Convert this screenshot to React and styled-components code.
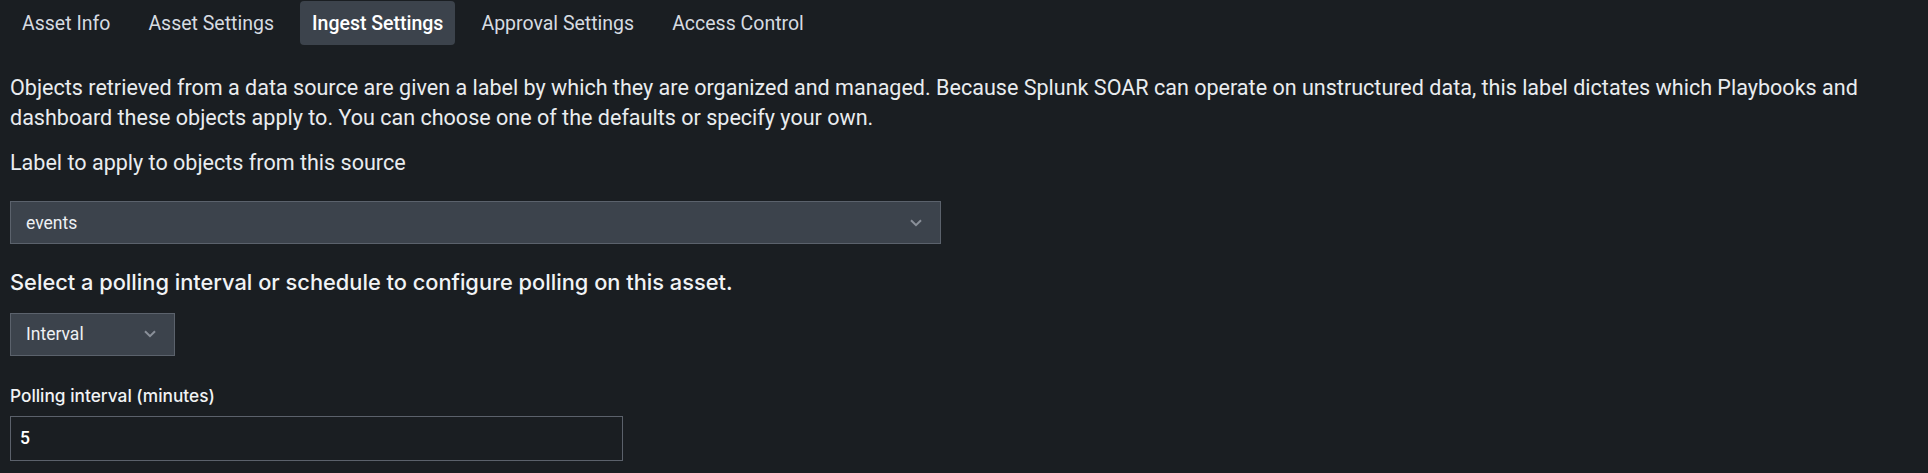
import React from 'react';
import styled, { createGlobalStyle } from 'styled-components';

const GlobalStyle = createGlobalStyle`
    html, body {
        margin: 0;
        background: #1a1e22;
    }
    body {
        font-family: Roboto, "Liberation Sans", sans-serif;
        color: #e9ecef;
    }
`;

const Page = styled.div`
    padding: 1px 10px 0 10px;
    width: 1880px;
`;

const TabBar = styled.nav`
    display: flex;
    gap: 14px;
    height: 44px;
`;

const Tab = styled.div`
    display: flex;
    align-items: center;
    padding: 0 12px;
    border-radius: 4px;
    font-size: 19.5px;
    font-weight: ${(p) => (p.active ? 500 : 400)};
    color: ${(p) => (p.active ? '#ffffff' : '#d6dbe1')};
    background: ${(p) => (p.active ? '#3c434c' : 'transparent')};
`;

const Intro = styled.p`
    margin: 28px 0 0 0;
    font-size: 21.55px;
    line-height: 30px;
`;

const FieldLabel = styled.div`
    margin-top: ${(p) => p.top || 0}px;
    font-size: 21.55px;
    line-height: 30px;
`;

const StrongLabel = styled.div`
    margin-top: ${(p) => p.top || 0}px;
    font-family: Inter, Roboto, sans-serif;
    font-size: ${(p) => p.size}px;
    font-weight: 500;
    line-height: ${(p) => p.lh}px;
    color: #f1f3f5;
`;

const Select = styled.div`
    box-sizing: border-box;
    display: flex;
    align-items: center;
    justify-content: space-between;
    width: ${(p) => p.width}px;
    height: 43px;
    margin-top: ${(p) => p.top}px;
    padding: 0 18px 0 15px;
    background: #3c434c;
    border: 1px solid #5b626c;
    font-size: 17.5px;
    color: #eef0f3;
`;

const Chevron = () => (
    <svg width="12" height="8" viewBox="0 0 12 8" fill="none">
        <path d="M1 1.2 L6 6.2 L11 1.2" stroke="#8a9099" strokeWidth="2" />
    </svg>
);

const TextInput = styled.div`
    box-sizing: border-box;
    display: flex;
    align-items: center;
    width: 613px;
    height: 45px;
    margin-top: 7px;
    padding: 0 9px;
    border: 1px solid #5b616b;
    background: #1a1e22;
    font-size: 17.5px;
    font-weight: 500;
    color: #ffffff;
`;

const tabs = ['Asset Info', 'Asset Settings', 'Ingest Settings', 'Approval Settings', 'Access Control'];

export default function App() {
    return (
        <Page>
            <GlobalStyle />
            <TabBar>
                {tabs.map((t) => (
                    <Tab key={t} active={t === 'Ingest Settings'}>{t}</Tab>
                ))}
            </TabBar>
            <Intro>
                Objects retrieved from a data source are given a label by which they are organized and managed. Because Splunk SOAR can operate on unstructured data, this label dictates which Playbooks and dashboard these objects apply to. You can choose one of the defaults or specify your own.
            </Intro>
            <FieldLabel top={15}>Label to apply to objects from this source</FieldLabel>
            <Select width={931} top={23}>
                <span>events</span>
                <Chevron />
            </Select>
            <StrongLabel top={23} size={21.8} lh={31.5}>Select a polling interval or schedule to configure polling on this asset.</StrongLabel>
            <Select width={165} top={14}>
                <span>Interval</span>
                <Chevron />
            </Select>
            <StrongLabel top={27} size={17.3} lh={26}>Polling interval (minutes)</StrongLabel>
            <TextInput>5</TextInput>
        </Page>
    );
}
